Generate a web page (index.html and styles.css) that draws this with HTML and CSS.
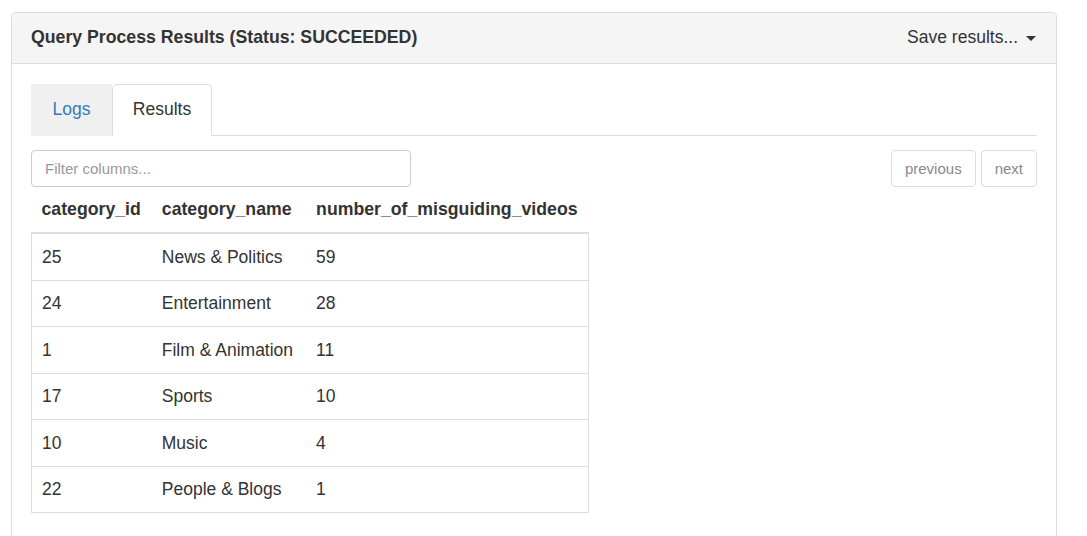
FILE: index.html
```html
<!DOCTYPE html>
<html>
<head>
<meta charset="utf-8">
<link rel="stylesheet" href="styles.css">
</head>
<body>
<div class="panel">
  <div class="panel-heading">
    <div class="panel-title">Query Process Results (Status: SUCCEEDED)</div>
    <div class="save">Save results... <span class="caret"></span></div>
  </div>
  <div class="panel-body">
    <ul class="tabs">
      <li class="tab tab-inactive">Logs</li>
      <li class="tab tab-active">Results</li>
    </ul>
    <div class="toolbar">
      <input class="filter" type="text" placeholder="Filter columns...">
      <div class="pager">
        <button class="btn">previous</button>
        <button class="btn">next</button>
      </div>
    </div>
    <table class="results">
      <thead>
        <tr><th>category_id</th><th class="col-name">category_name</th><th>number_of_misguiding_videos</th></tr>
      </thead>
      <tbody>
        <tr><td>25</td><td class="col-name">News &amp; Politics</td><td>59</td></tr>
        <tr><td>24</td><td class="col-name">Entertainment</td><td>28</td></tr>
        <tr><td>1</td><td class="col-name">Film &amp; Animation</td><td>11</td></tr>
        <tr><td>17</td><td class="col-name">Sports</td><td>10</td></tr>
        <tr><td>10</td><td class="col-name">Music</td><td>4</td></tr>
        <tr><td>22</td><td class="col-name">People &amp; Blogs</td><td>1</td></tr>
      </tbody>
    </table>
  </div>
</div>
</body>
</html>
```
FILE: styles.css
```css
html, body {
  margin: 0;
  padding: 0;
  background: #fff;
}
body {
  padding: 12px 30px 0 11px;
  font-family: "Liberation Sans", Arial, sans-serif;
  font-size: 17.5px;
  color: #333;
  height: 536px;
  box-sizing: border-box;
  overflow: hidden;
}
.panel {
  border: 1px solid #ddd;
  border-bottom: none;
  border-radius: 5px 5px 0 0;
  height: 524px;
  box-sizing: border-box;
}
.panel-heading {
  display: flex;
  justify-content: space-between;
  align-items: center;
  height: 50px;
  padding: 0 19px;
  background: #f5f5f5;
  border-bottom: 1px solid #ddd;
  border-radius: 5px 5px 0 0;
}
.panel-title {
  font-weight: bold;
  font-size: 17.7px;
  margin-top: -2px;
}
.save {
  font-size: 17.5px;
  display: flex;
  align-items: center;
  gap: 8px;
  margin-right: 1px;
  margin-top: -2px;
}
.caret {
  width: 0;
  height: 0;
  border-top: 5px solid #333;
  border-left: 5px solid transparent;
  border-right: 5px solid transparent;
  margin-top: 2px;
}
.panel-body {
  padding: 20px 19px;
}
.tabs {
  list-style: none;
  margin: 0;
  padding: 0;
  display: flex;
  border-bottom: 1px solid #ddd;
}
.tab {
  box-sizing: border-box;
  height: 52px;
  line-height: 51px;
  margin-bottom: -1px;
  font-size: 17.5px;
  text-align: center;
}
.tab-inactive {
  width: 81px;
  background: #f0f0f0;
  color: #337ab7;
}
.tab-active {
  width: 100px;
  background: #fff;
  border: 1px solid #ddd;
  border-bottom: 1px solid #fff;
  border-radius: 5px 5px 0 0;
  line-height: 49px;
}
.toolbar {
  display: flex;
  justify-content: space-between;
  margin-top: 14px;
  height: 37px;
}
.filter {
  box-sizing: border-box;
  width: 380px;
  height: 37px;
  border: 1px solid #ccc;
  border-radius: 4px;
  padding: 0 13px;
  font-family: "Liberation Sans", Arial, sans-serif;
  font-size: 15px;
  color: #555;
  outline: none;
}
.filter::placeholder {
  color: #999;
}
.pager {
  display: flex;
  gap: 5px;
}
.btn {
  box-sizing: border-box;
  height: 37px;
  padding: 0 13px;
  background: #fff;
  border: 1px solid #ddd;
  border-radius: 4px;
  font-family: "Liberation Sans", Arial, sans-serif;
  font-size: 15px;
  color: #888;
}
.results {
  border-collapse: collapse;
  margin-top: 0;
}
.results th {
  text-align: left;
  font-weight: bold;
  font-size: 17.7px;
  padding: 0 11px 0 10px;
  height: 45px;
  border-bottom: 2px solid #ddd;
}
.results tbody {
  border: 1px solid #ddd;
  border-top: none;
}
.results td {
  padding: 1px 11px 0 10px;
  height: 44.5px;
  border-top: 1px solid #ddd;
  font-size: 17.5px;
}
.results .col-name {
  padding-right: 13px;
}
.results tbody tr:first-child td {
  border-top: none;
}
```
